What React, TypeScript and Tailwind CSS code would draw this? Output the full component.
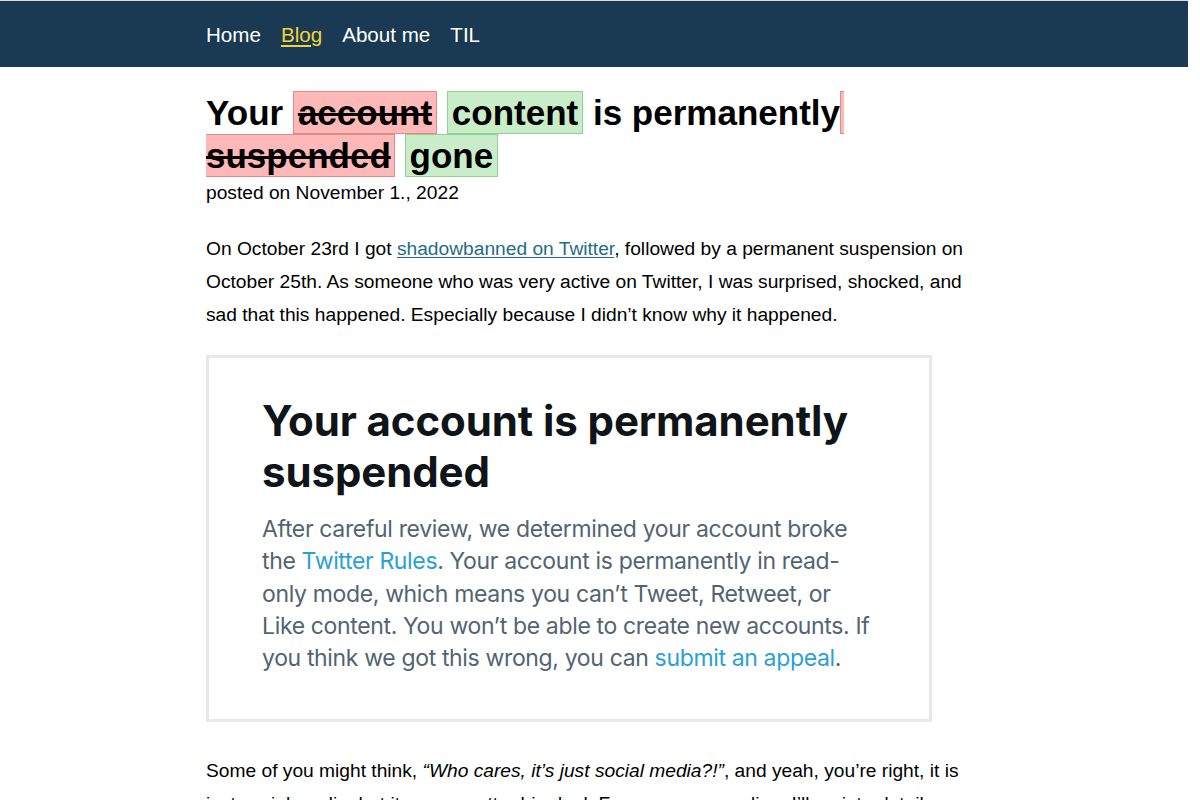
export default function App() {
  const nav = [
    { label: "Home", active: false },
    { label: "Blog", active: true },
    { label: "About me", active: false },
    { label: "TIL", active: false },
  ];

  return (
    <div className="w-[1188px] bg-white font-['Liberation_Sans',Arial,sans-serif] text-black">
      {/* Top navigation */}
      <header className="border-t border-[#d9dde1] bg-[#193a52]">
        <nav className="mx-auto flex h-[66px] w-[776px] items-center gap-[20px] pt-[3px] text-[20.6px]">
          {nav.map((item) => (
            <a
              key={item.label}
              href="#"
              className={item.active ? "text-[#f2d43b] underline underline-offset-[3px]" : "text-white"}
            >
              {item.label}
            </a>
          ))}
        </nav>
      </header>

      <main className="mx-auto w-[776px] pt-[24px]">
        {/* Post title with diff-style edits */}
        <h1 className="text-[35px] font-bold leading-[43px]">
          Your{" "}
          <del className="border border-[#e08a8a] bg-[#ffb8b8] px-[4px] py-[1px]">account</del>{" "}
          <ins className="border border-[#92cf92] bg-[#c9edc9] px-[4px] py-[1px] no-underline">content</ins>{" "}
          is permanently
          <del className="border border-[#e08a8a] bg-[#ffb8b8] px-[3px] py-[1px]"> suspended</del>{" "}
          <ins className="border border-[#92cf92] bg-[#c9edc9] px-[4px] py-[1px] no-underline">gone</ins>
        </h1>
        <p className="mt-[4px] text-[19.2px] leading-[23px]">posted on November 1., 2022</p>

        <p className="mt-[28px] text-[19.2px] leading-[33px]">
          On October 23rd I got{" "}
          <a href="#" className="text-[#1f6c86] underline underline-offset-2">
            shadowbanned on Twitter
          </a>
          , followed by a permanent suspension on October 25th. As someone who was very active on Twitter, I was
          surprised, shocked, and sad that this happened. Especially because I didn’t know why it happened.
        </p>

        {/* Screenshot of the suspension notice */}
        <figure className="mt-[24px] w-[726px] border-[3px] border-[#e8e8e8] bg-white pb-[45px] pl-[53px] pr-[40px] pt-[37px]">
          <h2 className="text-[42px] font-bold leading-[51px] tracking-[-0.1px] text-[#0f1419] font-['Inter',sans-serif]">
            Your account is permanently
            <br />
            suspended
          </h2>
          <p className="mt-[16px] whitespace-nowrap text-[23px] leading-[32.3px] tracking-[-0.35px] text-[#536471] font-['Inter',sans-serif]">
            After careful review, we determined your account broke
            <br />
            the <span className="text-[#2a9fd8]">Twitter Rules</span>. Your account is permanently in read-
            <br />
            only mode, which means you can’t Tweet, Retweet, or
            <br />
            Like content. You won’t be able to create new accounts. If
            <br />
            you think we got this wrong, you can <span className="text-[#2a9fd8]">submit an appeal</span>.
          </p>
        </figure>

        <p className="mt-[32px] text-[19.2px] leading-[33px]">
          Some of you might think, <em>“Who cares, it’s just social media?!”</em>, and yeah, you’re right, it is
          just social media, but it was a matter big deal. For everyone reading, I’ll go into details about what
          happened and why I think it matters.
        </p>
      </main>
    </div>
  );
}
